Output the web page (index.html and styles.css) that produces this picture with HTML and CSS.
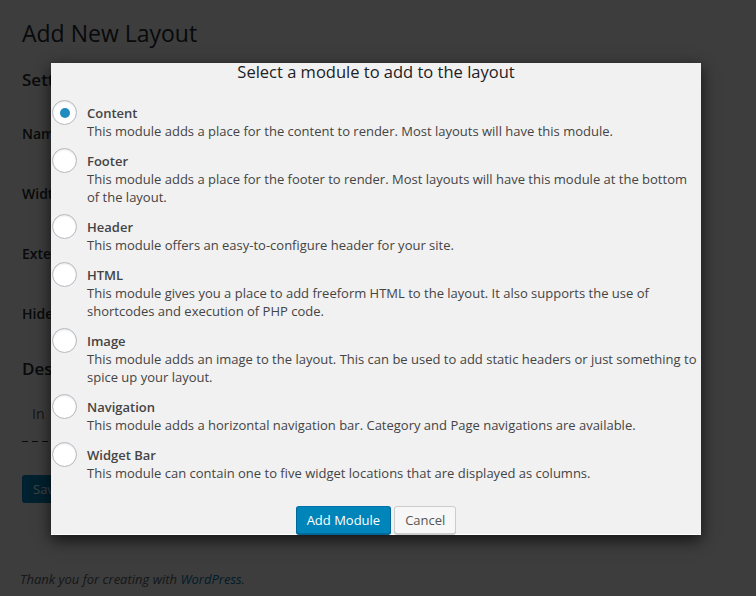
FILE: index.html
```html
<!DOCTYPE html>
<html>
<head>
<meta charset="utf-8">
<link rel="stylesheet" href="styles.css">
</head>
<body>
<div class="page">
  <h1 class="page-title">Add New Layout</h1>
  <h2 class="section-title">Settings</h2>
  <div class="field first">Name</div>
  <div class="field">Width</div>
  <div class="field">Extended</div>
  <div class="field">Hide</div>
  <h2 class="section-title desc-title">Description</h2>
  <div class="editor">In</div>
  <div class="dashed"></div>
  <div class="save-btn">Save</div>
  <p class="footer-note">Thank you for creating with <span class="wp-link">WordPress</span>.</p>
</div>
<div class="overlay"></div>
<div class="modal">
  <h3 class="modal-title">Select a module to add to the layout</h3>
  <div class="module-list">
    <div class="module">
      <span class="radio checked"></span>
      <div class="module-text">
        <div class="module-name">Content</div>
        <div class="module-desc">This module adds a place for the content to render. Most layouts will have this module.</div>
      </div>
    </div>
    <div class="module">
      <span class="radio"></span>
      <div class="module-text">
        <div class="module-name">Footer</div>
        <div class="module-desc">This module adds a place for the footer to render. Most layouts will have this module at the bottom of the layout.</div>
      </div>
    </div>
    <div class="module">
      <span class="radio"></span>
      <div class="module-text">
        <div class="module-name">Header</div>
        <div class="module-desc">This module offers an easy-to-configure header for your site.</div>
      </div>
    </div>
    <div class="module">
      <span class="radio"></span>
      <div class="module-text">
        <div class="module-name">HTML</div>
        <div class="module-desc">This module gives you a place to add freeform HTML to the layout. It also supports the use of shortcodes and execution of PHP code.</div>
      </div>
    </div>
    <div class="module">
      <span class="radio"></span>
      <div class="module-text">
        <div class="module-name">Image</div>
        <div class="module-desc">This module adds an image to the layout. This can be used to add static headers or just something to spice up your layout.</div>
      </div>
    </div>
    <div class="module">
      <span class="radio"></span>
      <div class="module-text">
        <div class="module-name">Navigation</div>
        <div class="module-desc">This module adds a horizontal navigation bar. Category and Page navigations are available.</div>
      </div>
    </div>
    <div class="module">
      <span class="radio"></span>
      <div class="module-text">
        <div class="module-name">Widget Bar</div>
        <div class="module-desc">This module can contain one to five widget locations that are displayed as columns.</div>
      </div>
    </div>
  </div>
  <div class="modal-actions">
    <span class="btn btn-primary">Add Module</span>
    <span class="btn btn-secondary">Cancel</span>
  </div>
</div>
</body>
</html>
```
FILE: styles.css
```css
html, body {
  margin: 0;
  padding: 0;
}
body {
  background: #f1f1f1;
  font-family: "Open Sans", "Liberation Sans", sans-serif;
  font-size: 13px;
  color: #444;
  width: 756px;
  height: 596px;
  overflow: hidden;
  position: relative;
}
.page {
  padding: 19px 0 0 22px;
}
.page-title {
  margin: 0;
  font-size: 23px;
  font-weight: 400;
  line-height: 29px;
  color: #23282d;
}
.section-title {
  margin: 20px 0 0;
  font-size: 17px;
  font-weight: 600;
  line-height: 24px;
  color: #23282d;
}
.field {
  font-size: 14px;
  font-weight: 600;
  line-height: 20px;
  color: #23282d;
  margin-top: 40px;
}
.field.first {
  margin-top: 32px;
}
.section-title.desc-title {
  margin-top: 33px;
}
.editor {
  margin: 23px 0 0 10px;
  font-size: 14px;
  line-height: 20px;
  color: #555;
}
.dashed {
  margin-top: 17px;
  width: 60px;
  height: 1px;
  background: repeating-linear-gradient(90deg, #23282d 0 6px, transparent 6px 10px);
}
.save-btn {
  margin-top: 33px;
  width: 60px;
  height: 28px;
  line-height: 28px;
  padding-left: 11px;
  box-sizing: border-box;
  background: #0085ba;
  border-radius: 3px;
  color: #fff;
  font-size: 13px;
}
.footer-note {
  margin: 67px 0 0 -2px;
  font-style: italic;
  font-size: 13px;
  line-height: 18px;
  color: #555d66;
}
.wp-link {
  color: #0073aa;
}
.overlay {
  position: absolute;
  inset: 0;
  background: rgba(0, 0, 0, 0.75);
}
.modal {
  position: absolute;
  left: 51px;
  top: 63px;
  width: 650px;
  height: 472px;
  background: #f1f1f1;
  box-shadow: 0 5px 15px rgba(0, 0, 0, 0.7);
  border-bottom: 1px solid #fff;
  box-sizing: border-box;
  display: flex;
  flex-direction: column;
}
.modal-title {
  margin: 0;
  text-align: center;
  font-size: 16.5px;
  font-weight: 400;
  line-height: 18px;
  color: #1d2125;
}
.module-list {
  margin-top: 23px;
  display: flex;
  flex-direction: column;
  gap: 12px;
}
.module {
  display: flex;
  align-items: flex-start;
}
.radio {
  flex: none;
  width: 25px;
  height: 25px;
  margin: -4px 10px 0 1px;
  box-sizing: border-box;
  border: 1px solid #b4b9be;
  border-radius: 50%;
  background: #fff;
  box-shadow: inset 0 1px 2px rgba(0, 0, 0, 0.1);
  display: flex;
  align-items: center;
  justify-content: center;
}
.radio.checked::before {
  content: "";
  width: 10px;
  height: 10px;
  border-radius: 50%;
  background: #1e8cbe;
}
.module-text {
  flex: 1;
  min-width: 0;
}
.module-name {
  font-weight: 600;
  line-height: 18px;
  color: #444;
}
.module-desc {
  line-height: 18px;
  color: #444;
}
.modal-actions {
  margin-top: auto;
  display: flex;
  justify-content: center;
  gap: 3px;
}
.btn {
  display: inline-block;
  height: 28px;
  line-height: 26px;
  padding: 0 10px;
  border: 1px solid;
  border-radius: 3px;
  box-sizing: border-box;
  font-size: 13px;
}
.btn-primary {
  background: #0085ba;
  border-color: #0073aa #006799 #006799;
  box-shadow: 0 1px 0 #006799;
  color: #fff;
}
.btn-secondary {
  background: #f7f7f7;
  border-color: #ccc;
  box-shadow: 0 1px 0 #ccc;
  color: #555;
}
```
